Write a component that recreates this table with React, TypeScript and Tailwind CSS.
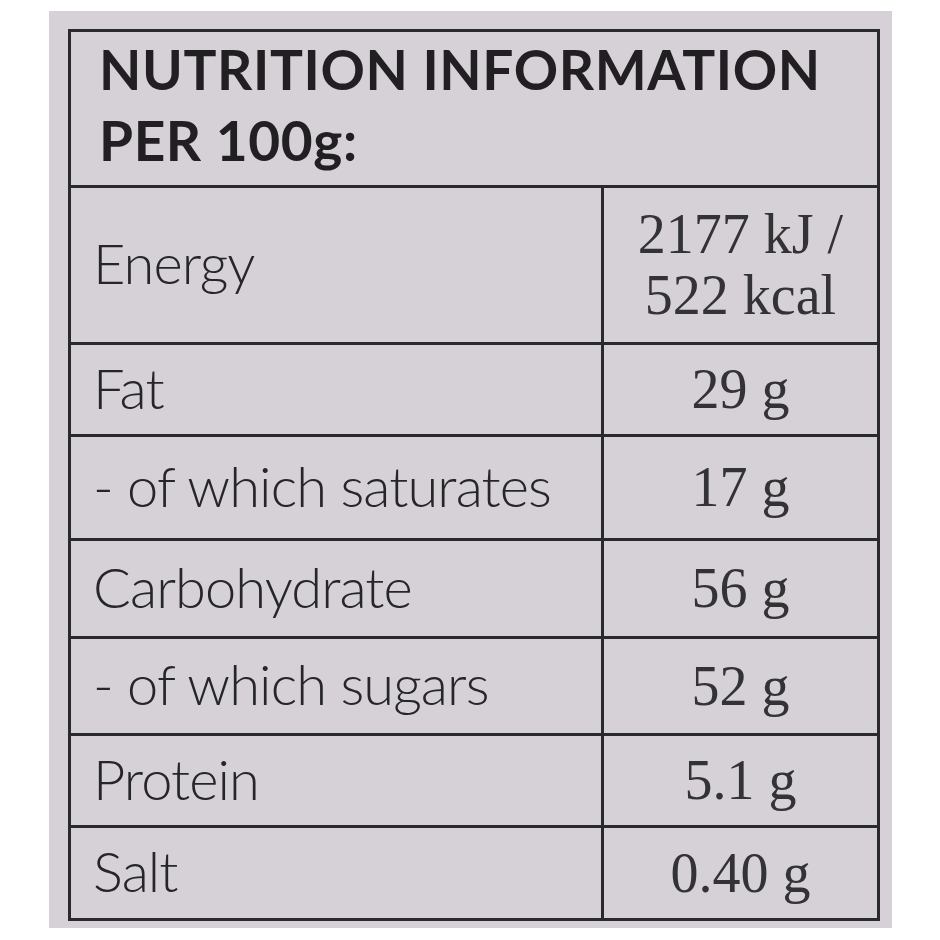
import React from 'react';

const rows = [
  { label: 'Energy', value: ['2177 kJ /', '522 kcal'], h: 'h-[157px]' },
  { label: 'Fat', value: ['29 g'], h: 'h-[92px]' },
  { label: '- of which saturates', value: ['17 g'], h: 'h-[104px]' },
  { label: 'Carbohydrate', value: ['56 g'], h: 'h-[98px]' },
  { label: '- of which sugars', value: ['52 g'], h: 'h-[97px]' },
  { label: 'Protein', value: ['5.1 g'], h: 'h-[92px]' },
  { label: 'Salt', value: ['0.40 g'], h: 'h-[93px]' },
];

const App: React.FC = () => {
  return (
    <div className="w-[940px] h-[940px] bg-white pt-[11px] pl-[49px]">
      <div className="w-[843px] h-[917px] bg-[#d5d1d6] pt-[18px] pl-[19px]">
        <div className="w-[812px] border-[3px] border-[#2a2a2d] text-[#262628]">
          <div className="h-[153px] pl-[28px] pt-[2px] font-['Lato',sans-serif] font-bold text-[55px] leading-[71px] tracking-[0.6px] text-[#221f22]">
            <div>NUTRITION INFORMATION</div>
            <div>PER 100g:</div>
          </div>
          {rows.map((row) => (
            <div key={row.label} className={`flex border-t-[3px] border-[#2a2a2d] ${row.h}`}>
              <div className="w-[530px] flex items-center pl-[22px] pb-[4px] font-['Lato',sans-serif] font-light text-[56px] tracking-[-0.9px]">
                {row.label}
              </div>
              <div className="flex-1 border-l-[3px] border-[#2a2a2d] flex flex-col items-center justify-center font-['Liberation_Serif',serif] text-[56px] leading-[61px] text-[#333336]">
                {row.value.map((v) => (
                  <div key={v}>{v}</div>
                ))}
              </div>
            </div>
          ))}
        </div>
      </div>
    </div>
  );
};

export default App;
